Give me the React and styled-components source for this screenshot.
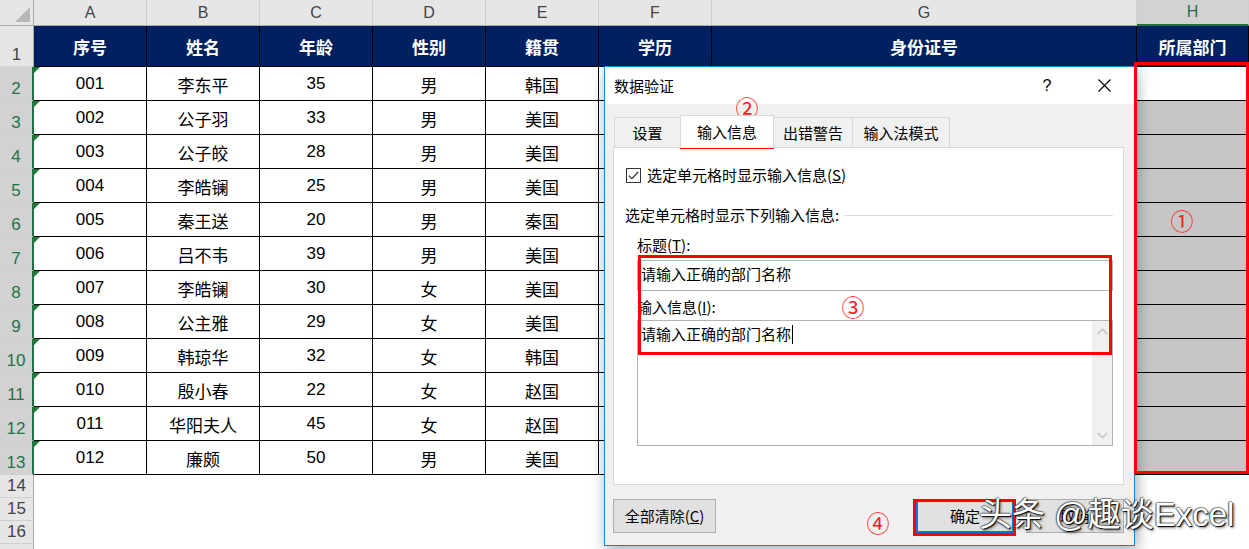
import React from "react";
import styled, { createGlobalStyle, css } from "styled-components";

const GlobalStyle = createGlobalStyle`
  html, body {
    margin: 0;
    padding: 0;
    background: #ffffff;
    overflow: hidden;
  }
  body {
    font-family: "Liberation Sans", "Noto Sans CJK SC", sans-serif;
  }
`;

const Page = styled.div`
  position: relative;
  width: 1249px;
  height: 549px;
  overflow: hidden;
`;

// spreadsheet grid
const Sheet = styled.div`
  display: grid;
  grid-template-columns: 34px repeat(6, 113px) 425px 112px;
  grid-template-rows: 26px 41px repeat(12, 34px) repeat(4, 23px);
  font-family: "Liberation Sans", "Noto Sans CJK SC", sans-serif;
`;

const Corner = styled.div`
  position: relative;
  box-sizing: border-box;
  background: #e6e6e6;
  border-right: 1px solid #ababab;
  border-bottom: 1px solid #ababab;
  &::after {
    content: "";
    position: absolute;
    right: 3px;
    bottom: 3px;
    width: 15px;
    height: 15px;
    background: #b7b7b7;
    clip-path: polygon(100% 0, 100% 100%, 0 100%);
  }
`;

const ColHead = styled.div`
  box-sizing: border-box;
  display: flex;
  align-items: center;
  justify-content: center;
  background: #e6e6e6;
  color: #444;
  font-size: 16px;
  border-right: 1px solid #cfcfcf;
  border-bottom: 1px solid #ababab;
  ${({ $active }) =>
    $active &&
    css`
      background: #d2d2d2;
      color: #217346;
      border-bottom: 2px solid #217346;
    `}
`;

const RowHead = styled.div`
  box-sizing: border-box;
  display: flex;
  align-items: flex-end;
  justify-content: center;
  padding-bottom: 1px;
  background: #e6e6e6;
  color: #444;
  font-size: 17px;
  line-height: 20px;
  border-right: 1px solid #ababab;
  border-bottom: 1px solid #cfcfcf;
  ${({ $active }) =>
    $active &&
    css`
      background: #d2d2d2;
      color: #217346;
      border-right: 2px solid #217346;
    `}
`;

const HeadCell = styled.div`
  box-sizing: border-box;
  display: flex;
  align-items: center;
  justify-content: center;
  background: #002060;
  color: #ffffff;
  font-weight: bold;
  font-size: 17px;
  border-right: 1px solid #000;
  border-bottom: 1px solid #000;
`;

const DataCell = styled.div`
  position: relative;
  box-sizing: border-box;
  display: flex;
  align-items: center;
  justify-content: center;
  padding-top: 1px;
  background: ${({ $fill }) => $fill || "#ffffff"};
  color: #000;
  font-size: 17px;
  border-right: 1px solid #000;
  border-bottom: 1px solid #000;
  ${({ $flag }) =>
    $flag &&
    css`
      &::before {
        content: "";
        position: absolute;
        top: 0;
        left: 0;
        border-top: 6px solid #1e7b34;
        border-right: 6px solid transparent;
      }
    `}
`;

const Blank = styled.div`
  background: #ffffff;
`;

// dialog window
const Dialog = styled.div`
  position: absolute;
  left: 604px;
  top: 66px;
  width: 531px;
  height: 480px;
  box-sizing: border-box;
  border: 1px solid #1883d7;
  background: #f0f0f0;
  box-shadow: 2px 4px 14px rgba(0, 0, 0, 0.35);
  display: flex;
  flex-direction: column;
  font-family: "Noto Sans CJK SC", "Liberation Sans", sans-serif;
  font-size: 15px;
  line-height: 20px;
  color: #000;
`;

const TitleBar = styled.div`
  height: 37px;
  flex-shrink: 0;
  display: flex;
  align-items: center;
  background: #ffffff;
  padding-left: 9px;
`;

const Title = styled.div`
  flex: 1;
`;

const TitleButton = styled.div`
  width: ${({ $w }) => $w}px;
  height: 37px;
  display: flex;
  align-items: center;
  justify-content: center;
  font-family: "Liberation Sans", sans-serif;
  font-size: 16px;
`;

const Body = styled.div`
  flex: 1;
  display: flex;
  flex-direction: column;
  padding: 13px 10px 0 8px;
`;

const TabRow = styled.div`
  height: 30px;
  display: flex;
  align-items: flex-end;
  padding-left: 2px;
  position: relative;
  z-index: 1;
`;

const Tab = styled.div`
  box-sizing: border-box;
  width: ${({ $w }) => $w}px;
  height: 30px;
  margin-left: -1px;
  display: flex;
  align-items: center;
  justify-content: center;
  background: #f0f0f0;
  border: 1px solid #d9d9d9;
  border-bottom: none;
  ${({ $selected }) =>
    $selected &&
    css`
      height: 33px;
      margin-bottom: -1px;
      background: #ffffff;
      position: relative;
      z-index: 2;
    `}
`;

const Panel = styled.div`
  box-sizing: border-box;
  height: 338px;
  background: #ffffff;
  border: 1px solid #d9d9d9;
  padding: 19px 10px 0 11px;
  display: flex;
  flex-direction: column;
`;

const CheckRow = styled.div`
  display: flex;
  align-items: center;
  height: 16px;
  margin-left: 1px;
  gap: 6px;
`;

const CheckBox = styled.div`
  box-sizing: border-box;
  width: 15px;
  height: 15px;
  border: 1px solid #333;
  display: flex;
  align-items: center;
  justify-content: center;
`;

const SectionRow = styled.div`
  display: flex;
  align-items: center;
  height: 20px;
  margin-top: 22px;
`;

const Rule = styled.div`
  flex: 1;
  height: 1px;
  background: #dcdcdc;
  margin-left: 5px;
`;

const FieldLabel = styled.div`
  height: 20px;
  margin-left: 12px;
  margin-top: ${({ $mt }) => $mt}px;
`;

const Field = styled.div`
  box-sizing: border-box;
  margin-left: 12px;
  height: ${({ $h }) => $h}px;
  margin-top: ${({ $mt }) => $mt}px;
  border: 1px solid #b4b4b4;
  padding-left: 3px;
  display: flex;
  align-items: ${({ $multi }) => ($multi ? "flex-start" : "center")};
  position: relative;
`;

const FieldText = styled.div`
  padding-top: ${({ $pt }) => $pt || 0}px;
  padding-bottom: ${({ $pb }) => $pb || 0}px;
  line-height: 22px;
  display: flex;
  align-items: center;
`;

const Caret = styled.span`
  display: inline-block;
  width: 1px;
  height: 19px;
  background: #000;
  margin-left: 1px;
`;

const ScrollBar = styled.div`
  position: absolute;
  right: 0;
  top: 0;
  bottom: 0;
  width: 20px;
  background: #f0f0f0;
  display: flex;
  flex-direction: column;
  justify-content: space-between;
  align-items: center;
  padding: 7px 0 6px;
  box-sizing: border-box;
`;

const ButtonRow = styled.div`
  display: flex;
  align-items: center;
  margin-top: 14px;
  height: 34px;
  gap: 12px;
`;

const Button = styled.div`
  box-sizing: border-box;
  width: ${({ $w }) => $w}px;
  height: 34px;
  display: flex;
  align-items: center;
  justify-content: center;
  background: #e1e1e1;
  border: 1px solid #adadad;
  ${({ $default }) =>
    $default &&
    css`
      border-color: #0078d7;
      box-shadow: inset 0 0 0 1px #0078d7;
    `}
`;

const Spacer = styled.div`
  flex: 1;
`;

const U = styled.span`
  text-decoration: underline;
`;

// annotations over the screenshot
const RedFrame = styled.div`
  position: absolute;
  box-sizing: border-box;
  left: ${({ $x }) => $x}px;
  top: ${({ $y }) => $y}px;
  width: ${({ $w }) => $w}px;
  height: ${({ $h }) => $h}px;
  border: 3px solid #ff0000;
  pointer-events: none;
`;

const Marker = styled.span`
  position: absolute;
  left: ${({ $x }) => $x}px;
  top: ${({ $y }) => $y}px;
  transform: translate(-50%, -50%);
  font-family: "Noto Sans CJK SC", "DejaVu Sans", sans-serif;
  font-size: 23px;
  line-height: 1;
  color: #ff1a1a;
`;

const Watermark = styled.div`
  position: absolute;
  left: 979px;
  top: 497px;
  font-family: "Liberation Sans", "Noto Sans CJK SC", sans-serif;
  font-size: 33px;
  line-height: 36px;
  color: #ffffff;
  white-space: nowrap;
  text-shadow: 1px 1px 1px #000, -1px 0 1px rgba(0, 0, 0, 0.55),
    0 -1px 1px rgba(0, 0, 0, 0.45), 2px 2px 3px rgba(0, 0, 0, 0.45);
`;

const letters = ["A", "B", "C", "D", "E", "F", "G", "H"];
const headers = ["序号", "姓名", "年龄", "性别", "籍贯", "学历", "身份证号", "所属部门"];
const rows = [
  ["001", "李东平", "35", "男", "韩国"],
  ["002", "公子羽", "33", "男", "美国"],
  ["003", "公子皎", "28", "男", "美国"],
  ["004", "李皓镧", "25", "男", "美国"],
  ["005", "秦王送", "20", "男", "秦国"],
  ["006", "吕不韦", "39", "男", "美国"],
  ["007", "李皓镧", "30", "女", "美国"],
  ["008", "公主雅", "29", "女", "美国"],
  ["009", "韩琼华", "32", "女", "韩国"],
  ["010", "殷小春", "22", "女", "赵国"],
  ["011", "华阳夫人", "45", "女", "赵国"],
  ["012", "廉颇", "50", "男", "美国"],
];

const CloseIcon = () => (
  <svg width="13" height="13" viewBox="0 0 13 13">
    <path d="M0.5 0.5 L12.5 12.5 M12.5 0.5 L0.5 12.5" stroke="#000" strokeWidth="1.1" fill="none" />
  </svg>
);

const CheckIcon = () => (
  <svg width="11" height="9" viewBox="0 0 11 9">
    <path d="M0.8 4.6 L3.9 7.6 L10.2 1" stroke="#333" strokeWidth="1.3" fill="none" />
  </svg>
);

const Chevron = ({ up }) => (
  <svg width="11" height="7" viewBox="0 0 11 7">
    <path
      d={up ? "M0.8 6 L5.5 1.3 L10.2 6" : "M0.8 1 L5.5 5.7 L10.2 1"}
      stroke="#c2c2c2"
      strokeWidth="1.6"
      fill="none"
    />
  </svg>
);

const Spreadsheet = () => (
  <Sheet>
    <Corner />
    {letters.map((l) => (
      <ColHead key={l} $active={l === "H"}>
        {l}
      </ColHead>
    ))}
    <RowHead>1</RowHead>
    {headers.map((h) => (
      <HeadCell key={h}>{h}</HeadCell>
    ))}
    {rows.map((r, i) => (
      <React.Fragment key={r[0]}>
        <RowHead $active>{i + 2}</RowHead>
        {letters.map((l, j) => (
          <DataCell
            key={l}
            $flag={j === 0}
            $fill={j === 7 && i > 0 ? "#c6c6c6" : undefined}
          >
            {r[j] || ""}
          </DataCell>
        ))}
      </React.Fragment>
    ))}
    {[14, 15, 16, null].map((n, k) => (
      <React.Fragment key={k}>
        <RowHead>{n}</RowHead>
        {letters.map((l) => (
          <Blank key={l} />
        ))}
      </React.Fragment>
    ))}
  </Sheet>
);

const ValidationDialog = () => (
  <Dialog>
    <TitleBar>
      <Title>数据验证</Title>
      <TitleButton $w={54}>?</TitleButton>
      <TitleButton $w={60}>
        <CloseIcon />
      </TitleButton>
    </TitleBar>
    <Body>
      <TabRow>
        <Tab $w={67}>设置</Tab>
        <Tab $w={94} $selected>
          输入信息
        </Tab>
        <Tab $w={80}>出错警告</Tab>
        <Tab $w={98}>输入法模式</Tab>
      </TabRow>
      <Panel>
        <CheckRow>
          <CheckBox>
            <CheckIcon />
          </CheckBox>
          <span>
            选定单元格时显示输入信息(<U>S</U>)
          </span>
        </CheckRow>
        <SectionRow>
          <span>选定单元格时显示下列输入信息:</span>
          <Rule />
        </SectionRow>
        <FieldLabel $mt={10}>
          标题(<U>T</U>):
        </FieldLabel>
        <Field $h={31} $mt={5}>
          <FieldText $pb={4}>请输入正确的部门名称</FieldText>
        </Field>
        <FieldLabel $mt={6}>
          输入信息(<U>I</U>):
        </FieldLabel>
        <Field $h={126} $mt={3} $multi>
          <FieldText $pt={2}>
            请输入正确的部门名称
            <Caret />
          </FieldText>
          <ScrollBar>
            <Chevron up />
            <Chevron />
          </ScrollBar>
        </Field>
      </Panel>
      <ButtonRow>
        <Button $w={103}>
          全部清除(<U>C</U>)
        </Button>
        <Spacer />
        <Button $w={98} $default>
          确定
        </Button>
        <Button $w={98}>取消</Button>
      </ButtonRow>
    </Body>
  </Dialog>
);

export default function App() {
  return (
    <Page>
      <GlobalStyle />
      <Spreadsheet />
      <ValidationDialog />
      <Marker $x={747} $y={107}>②</Marker>
      <Marker $x={853} $y={306}>③</Marker>
      <Marker $x={878} $y={522}>④</Marker>
      <Marker $x={1182} $y={220}>①</Marker>
      <RedFrame $x={1134} $y={62} $w={115} $h={412} />
      <RedFrame $x={680} $y={115} $w={94} $h={34} />
      <RedFrame $x={638} $y={255} $w={474} $h={100} />
      <RedFrame $x={913} $y={499} $w={103} $h={37} />
      <Watermark>头条 @趣谈Excel</Watermark>
    </Page>
  );
}
